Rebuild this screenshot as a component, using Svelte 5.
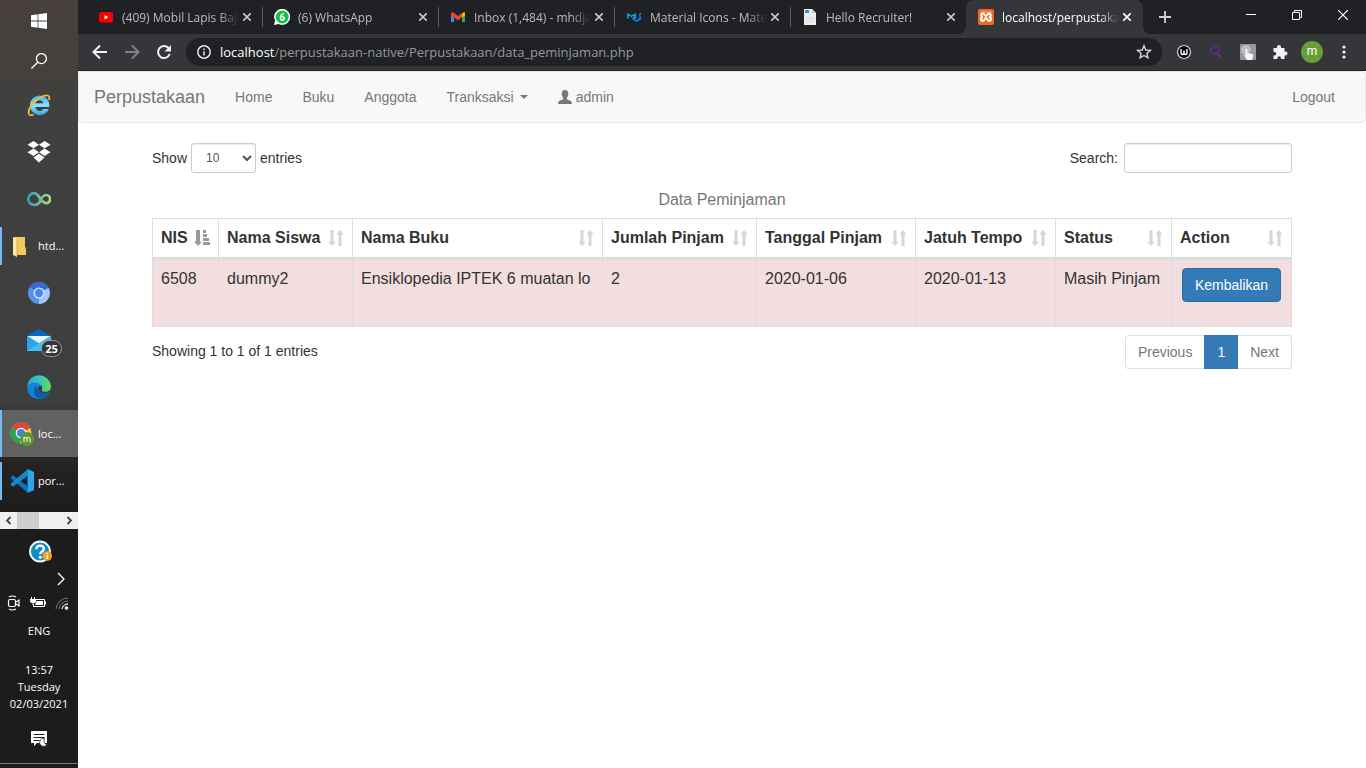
<script>
  const tabs = [
    { icon: 'youtube', title: '(409) Mobil Lapis Baja' },
    { icon: 'whatsapp', title: '(6) WhatsApp' },
    { icon: 'gmail', title: 'Inbox (1,484) - mhdja' },
    { icon: 'mui', title: 'Material Icons - Mate' },
    { icon: 'page', title: 'Hello Recruiter!' },
    { icon: 'xampp', title: 'localhost/perpustaka', active: true }
  ];

  const columns = [
    { name: 'NIS', width: 67, sorted: true },
    { name: 'Nama Siswa', width: 134 },
    { name: 'Nama Buku', width: 250 },
    { name: 'Jumlah Pinjam', width: 154 },
    { name: 'Tanggal Pinjam', width: 159 },
    { name: 'Jatuh Tempo', width: 140 },
    { name: 'Status', width: 116 },
    { name: 'Action', width: 120 }
  ];

  const rows = [
    ['6508', 'dummy2', 'Ensiklopedia IPTEK 6 muatan lo', '2', '2020-01-06', '2020-01-13', 'Masih Pinjam']
  ];

  let length = $state('10');
  let query = $state('');
</script>

<div class="screen">
  <aside class="taskbar">
    <div class="apps">
      <button class="slot short" aria-label="Start">
        <svg width="16" height="16" viewBox="0 0 16 16" fill="#fff"><path d="M0 2.2 6.6 1.3V7.6H0zM7.4 1.2 16 0V7.6H7.4zM0 8.4H6.6V14.7L0 13.8zM7.4 8.4H16V16L7.4 14.8z" /></svg>
      </button>
      <button class="slot short" aria-label="Cari">
        <svg width="16" height="16" viewBox="0 0 16 16" fill="none" stroke="#fff" stroke-width="1.3"><circle cx="10.4" cy="5.6" r="5" /><path d="M6.8 9.2.4 15.6" /></svg>
      </button>
      <button class="slot" aria-label="Internet Explorer">
        <svg width="24" height="24" viewBox="0 0 24 24">
          <defs><linearGradient id="ie" x1="0" y1="0" x2="0" y2="1"><stop offset="0" stop-color="#3db4ee" /><stop offset=".5" stop-color="#8be0ff" /><stop offset="1" stop-color="#35a6e6" /></linearGradient></defs>
          <path d="M12.500 2.500A9.800 9.800 0 1 0 21.800 16H16.200A4.200 4.200 0 0 1 8.500 14H22.300C23 7.500 18.500 2.500 12.500 2.500zM8.500 10.200A4.200 4.200 0 0 1 16.500 10.200z" fill="url(#ie)" />
          <path d="M22 7C23.500 2 20 .900 13.500 4.200C6 8 .500 16.500 1.800 20.800C2.300 22.300 4.200 22.600 6.600 21.500" fill="none" stroke="#f3bd2b" stroke-width="1.800" />
        </svg>
      </button>
      <button class="slot" aria-label="Dropbox">
        <svg width="24" height="24" viewBox="0 0 24 24" fill="#fff"><path d="M6.5 1 12 4.7 6.5 8.3.5 4.7zM17.5 1 23.5 4.7 17.5 8.3 12 4.7zM.5 12.2 6.5 8.5 12 12.2 6.5 16zM17.5 8.5 23.5 12.2 17.5 16 12 12.2zM6.5 17.5 12 13.8 17.5 17.5 12 22.5z" /></svg>
      </button>
      <button class="slot" aria-label="Infinity">
        <svg width="24" height="16" viewBox="0 0 24 16" fill="none" stroke-width="2.7">
          <defs><linearGradient id="inf"><stop offset="0" stop-color="#3a9bb5" /><stop offset="1" stop-color="#a9dc83" /></linearGradient></defs>
          <path d="M14 9.7C11.5 13 9.8 14 7.2 14A5.8 5.8 0 0 1 7.2 2.2C12 2.2 14 12.2 19 12.2A4.1 4.1 0 0 0 19 4C16.8 4 15 6 12.5 10" stroke="url(#inf)" />
        </svg>
      </button>
      <button class="slot labelled running">
        <svg width="24" height="24" viewBox="0 0 24 24"><path d="M4 3h11v10l1 1v7H5z" fill="#f4c95c" /><path d="M3 3l4 2v18l-4-2z" fill="#ffe9a2" /><path d="M7 6v15" stroke="#dcae43" /></svg>
        <span>htd...</span>
      </button>
      <button class="slot" aria-label="Chromium">
        <svg width="24" height="24" viewBox="0 0 24 24"><circle cx="12" cy="12" r="11" fill="#5b91ee" /><path d="M12 12 2.7 6A11 11 0 0 1 21.5 6.5z" fill="#376bcb" /><path d="M12 12 21.6 7A11 11 0 0 1 12 23z" fill="#a5c4fb" /><circle cx="12" cy="12" r="5.5" fill="#dce9ff" /><circle cx="12" cy="12" r="4.2" fill="#4b87ed" /></svg>
      </button>
      <button class="slot mail" aria-label="Mail, 25 baru">
        <svg width="24" height="24" viewBox="0 0 24 24"><path d="M0 8 12 .8 24 8v5H0z" fill="#0868bd" /><path d="M0 8h24L12 15.500z" fill="#f2f3f5" /><path d="M0 8 12 15.500 24 8V23H0z" fill="#27a5ed" /><path d="M24 8V23H0z" fill="#42bef5" /><path d="M2 8h20L12 15z" fill="#f2f3f5" /></svg>
        <span class="count">25</span>
      </button>
      <button class="slot" aria-label="Microsoft Edge">
        <svg width="24" height="24" viewBox="0 0 24 24">
          <defs>
            <linearGradient id="edge"><stop offset="0" stop-color="#25a9e0" /><stop offset=".5" stop-color="#2fc6c4" /><stop offset="1" stop-color="#66db52" /></linearGradient>
          </defs>
          <path d="M.300 10C-1 18 4.500 24 12 24C17 24 21 21.500 23 17.500C20 19 16 19 14 16.500V8L6 5z" fill="#1583d8" />
          <path d="M8.500 11C4.500 18 9 24 14.500 23.700A12 12 0 0 0 22.800 17.800C18.500 20.500 12.500 19 11 14z" fill="#0d5ca9" />
          <path d="M.200 10.500A12 12 0 0 1 24 11C24.200 15.500 20.500 17.300 16.500 16.700C14.300 16.200 14.200 15.200 15 13.800C16.500 8 6 4.500 .200 10.500z" fill="url(#edge)" />
          <path d="M11 13C11 11 13.500 10 15.200 12.200C15.200 13.500 14.200 14 14.300 15.200C14.800 17.300 19 17.700 22.500 17.300C18.500 19.800 11.500 18.500 11 13z" fill="#3a3d3f" />
        </svg>
      </button>
      <button class="slot labelled running current">
        <svg width="24" height="24" viewBox="0 0 24 24"><circle cx="11" cy="11" r="10.5" fill="#f9cb37" /><path d="M11 11 2 5.5A10.5 10.5 0 0 1 20.3 6z" fill="#df4535" /><path d="M11 11 2 5.4A10.5 10.5 0 0 0 10 21.5z" fill="#2da252" /><circle cx="11" cy="11" r="5.3" fill="#fff" /><circle cx="11" cy="11" r="4.1" fill="#4482ed" /><circle cx="17" cy="17" r="7" fill="#5b9832" /><path d="M14 20v-5M14 16.8q0-1.5 1.5-1.5T17 16.8V20M17 16.8q0-1.5 1.5-1.5T20 16.8V20" fill="none" stroke="#fff" /></svg>
        <span>loc...</span>
      </button>
      <button class="slot labelled running">
        <svg width="24" height="24" viewBox="0 0 24 24"><path d="M17.5 0 24 3v18l-6.500 3z" fill="#29a6f2" /><path d="M.8 8 3 6.300 18 17.500V24L.8 9.500z" fill="#0f73bb" /><path d="M.8 16 3 17.700 18 6.500V0L.8 14.500z" fill="#1688d3" /></svg>
        <span>por...</span>
      </button>
    </div>
    <div class="hscroll">
      <svg width="17" height="17" viewBox="0 0 17 17" fill="none" stroke="#444" stroke-width="1.8"><path d="M10.500 5 7 8.500 10.500 12" /></svg>
      <span class="thumb"></span>
      <svg width="17" height="17" viewBox="0 0 17 17" fill="none" stroke="#444" stroke-width="1.8"><path d="M6.500 5 10 8.500 6.500 12" /></svg>
    </div>
    <div class="tray">
      <div class="help">
        <svg width="24" height="24" viewBox="0 0 24 24"><circle cx="12" cy="11.500" r="10" fill="#118cc9" stroke="#fff" stroke-width="1.800" /><path d="M8.300 9.200Q8.500 5.600 12.200 5.600 15.800 5.700 15.800 8.700 15.800 10.500 13.800 11.700 12.200 12.600 12.200 14.200" fill="none" stroke="#fff" stroke-width="2.400" /><circle cx="12.200" cy="17.200" r="1.500" fill="#fff" /><circle cx="19.200" cy="16" r="4.800" fill="#eda41f" /><path d="M19.200 15v4M19.200 12.700v1.300" stroke="#fff" stroke-width="1.500" /></svg>
      </div>
      <div class="expand">
        <svg width="10" height="14" viewBox="0 0 10 14" fill="none" stroke="#fff" stroke-width="1.300"><path d="M2 1 8 7 2 13" /></svg>
      </div>
      <div class="status">
        <svg width="14" height="16" viewBox="0 0 14 16" fill="none" stroke="#fff" stroke-width="1.200"><rect x="1.500" y="4.500" width="7" height="7" rx="1.500" /><path d="M9 7 12 5v6L9 9M2 2Q5 0 9 2M2 14Q5 16 9 14" /></svg>
        <svg width="16" height="16" viewBox="0 0 16 16"><path d="M5.500 4.500H14.500V11.500H3.500V9.500" fill="none" stroke="#fff" /><path d="M6.500 6H13v4H5zM15 6.500h1v3h-1z" fill="#fff" /><path d="M1.500 2v3M4.500 2v3M0 4.500H6L5 7.500H1zM3 7v3" stroke="#fff" fill="#fff" /></svg>
        <svg width="14" height="16" viewBox="0 0 14 16" fill="none"><path d="M1 14A12 12 0 0 1 13 3M4 14A9 9 0 0 1 13 6" stroke="#777" /><path d="M7 14A6 6 0 0 1 13 9" stroke="#ddd" stroke-width="1.300" /><circle cx="11.500" cy="13" r="1.800" fill="#fff" /></svg>
      </div>
      <div class="lang">ENG</div>
      <div class="clock"><span>13:57</span><span>Tuesday</span><span>02/03/2021</span></div>
      <div class="notes">
        <svg width="18" height="18" viewBox="0 0 18 18"><path d="M1 1H17V13H7L4 16V13H1z" fill="#fff" /><path d="M3.500 4.500h11M3.500 7.500h11M3.500 10.500h6" stroke="#222" /><path d="M14.500 8.500A4 4 0 1 0 17 14.500A4 4 0 0 1 14.500 8.500z" fill="#fff" stroke="#222" stroke-width=".8" /></svg>
      </div>
    </div>
  </aside>

  <div class="window">
    <div class="tabstrip">
      {#each tabs as tab}
        <div class="tab" class:active={tab.active}>
          <svg class="favicon" width="16" height="16" viewBox="0 0 16 16">
            {#if tab.icon === 'youtube'}
              <rect x="1" y="3" width="14" height="10.500" rx="2.500" fill="#f00" /><path d="M6.500 6 10.300 8.200 6.500 10.500z" fill="#fff" />
            {:else if tab.icon === 'whatsapp'}
              <path d="M0 16 1 11.500A8 8 0 1 1 4.500 15z" fill="#fff" /><circle cx="8.200" cy="8" r="6.500" fill="#10c143" /><path d="M10 5.300Q7 4.300 6.400 8.300" fill="none" stroke="#fff" stroke-width="1.600" /><circle cx="8.300" cy="9.300" r="1.800" fill="none" stroke="#fff" stroke-width="1.500" />
            {:else if tab.icon === 'gmail'}
              <path d="M1 4.500V13H4V6.500z" fill="#4285f4" /><path d="M15 4.500V13H12V6.500z" fill="#34a853" /><path d="M12 4.500 14 3Q15 3 15 4.500V6.500L12 8.500z" fill="#fbbc04" /><path d="M1 4.500Q1.500 2.500 3.500 3.500L8 7 12 4V8L8 11.500 4 8.500 1 6.500z" fill="#ea4335" />
            {:else if tab.icon === 'mui'}
              <path d="M1 10V4L5.500 6.500 10 4V9L7 10.700 5.500 9.700 8 8.200V6.700L5.500 8.200 2.500 6.500V9z" fill="#0aa4ee" /><path d="M7 11 10.500 13 15 10.500V7L13 8V9.500L10.500 11 8.500 10zM13 5 15 3.800V6L13 7z" fill="#007fff" />
            {:else if tab.icon === 'page'}
              <path d="M2 0H10L14 4V16H2z" fill="#eee" /><path d="M10 0V4H14z" fill="#c8c8c8" /><rect x="3" y="1" width="4" height="3" fill="#219bd3" /><path d="M4 8.500h8M4 10.500h8M4 12.500h8" stroke="#ddd" />
            {:else}
              <rect width="16" height="16" rx="2" fill="#ec6b1c" /><path d="M2 3H14" stroke="#f6b48b" /><path d="M5 4.500A1.700 1.700 0 0 0 5 8 1.700 1.700 0 0 0 5 11.800C7 11.800 6.500 9 8 9S9 11.800 11 11.800A1.700 1.700 0 0 0 11 8 1.700 1.700 0 0 0 11 4.500C9 4.500 9.500 7 8 7S7 4.500 5 4.500z" fill="none" stroke="#fff" stroke-width="1.900" />
            {/if}
          </svg>
          <span class="title">{tab.title}</span>
          <button class="close" aria-label="Tutup tab">
            <svg width="8" height="8" viewBox="0 0 8 8" stroke="currentColor" stroke-width="1.600"><path d="M0 0 8 8M8 0 0 8" /></svg>
          </button>
        </div>
      {/each}
      <button class="plus" aria-label="Tab baru">
        <svg width="12" height="12" viewBox="0 0 12 12" stroke="#d0d1d3" stroke-width="1.800"><path d="M6 0V12M0 6H12" /></svg>
      </button>
      <div class="controls">
        <button aria-label="Minimalkan"><svg width="10" height="10" viewBox="0 0 10 10" stroke="#fff"><path d="M0 4.500H10" /></svg></button>
        <button aria-label="Pulihkan"><svg width="10" height="10" viewBox="0 0 10 10" stroke="#fff" fill="none"><path d="M.500 2.500H7.500V9.500H.500zM2.500 2.500V.500H9.500V7.500H7.500" /></svg></button>
        <button aria-label="Tutup"><svg width="10" height="10" viewBox="0 0 10 10" stroke="#fff" stroke-width="1.200"><path d="M0 0 10 10M10 0 0 10" /></svg></button>
      </div>
    </div>

    <div class="toolbar">
      <button class="tool" aria-label="Kembali"><svg width="16" height="16" viewBox="0 0 16 16" fill="none" stroke="#f1f3f4" stroke-width="2"><path d="M15 8H2M8 1.500 1.500 8 8 14.500" /></svg></button>
      <button class="tool" aria-label="Maju"><svg width="16" height="16" viewBox="0 0 16 16" fill="none" stroke="#818285" stroke-width="2"><path d="M1 8H14M8 1.500 14.500 8 8 14.500" /></svg></button>
      <button class="tool" aria-label="Muat ulang"><svg width="16" height="16" viewBox="0 0 16 16"><path d="M13.700 10A6 6 0 1 1 12.500 4" fill="none" stroke="#f1f3f4" stroke-width="2" /><path d="M15 1V7.500H8.500z" fill="#f1f3f4" /></svg></button>
      <div class="omnibox">
        <svg width="16" height="16" viewBox="0 0 16 16" fill="none" stroke="#e4e6e8" stroke-width="1.500"><circle cx="8" cy="8" r="6.200" /><path d="M8 7.200V11.500M8 4.500V6" /></svg>
        <span class="url"><b>localhost</b>/perpustakaan-native/Perpustakaan/data_peminjaman.php</span>
        <svg width="16" height="16" viewBox="0 0 16 16" fill="none" stroke="#d3d5d7" stroke-width="1.400"><path d="M8 1.800 9.800 6 14.300 6.400 10.900 9.400 11.900 13.800 8 11.500 4.100 13.800 5.100 9.400 1.700 6.400 6.200 6z" /></svg>
      </div>
      <button class="tool" aria-label="Ekstensi W"><svg width="16" height="16" viewBox="0 0 16 16" fill="none"><circle cx="8" cy="8" r="6.500" fill="#000" stroke="#ddd" stroke-width="1.200" /><path d="M5 5V8.500Q5 10.500 6.500 10.500T8 8.500V6.500M8 8.500Q8 10.500 9.500 10.500T11 8.500V5" stroke="#fff" stroke-width="1.400" /></svg></button>
      <button class="tool" aria-label="Ekstensi pencarian"><svg width="16" height="16" viewBox="0 0 16 16" fill="none" stroke="#71269c" stroke-width="1.500"><circle cx="7" cy="6" r="3.900" /><path d="M9.500 9 12.500 13.500" stroke-width="2" /></svg></button>
      <button class="tool" aria-label="Ekstensi sentuh"><svg width="16" height="16" viewBox="0 0 16 16"><rect width="16" height="16" rx="1" fill="#999" /><circle cx="6" cy="6" r="4.200" fill="#bbb" stroke="#ccc" /><path d="M5.500 5H7.500V9L12.500 10Q13.500 10.500 13 12L12 16H7L4 11.500 5.500 11z" fill="#f3f6fc" /></svg></button>
      <button class="tool" aria-label="Ekstensi"><svg width="16" height="16" viewBox="0 0 16 16" fill="#f1f3f4"><path d="M1.500 4H5V3A2 2 0 0 1 9 3V4H12.500V7.500H13.500A2 2 0 0 1 13.500 11.500H12.500V15H9V14A1.800 1.800 0 0 0 5.400 14V15H1.500V11.500H2.500A1.800 1.800 0 0 0 2.500 7.900H1.500z" /></svg></button>
      <button class="tool" aria-label="Profil"><span class="avatar">m</span></button>
      <button class="tool" aria-label="Menu"><svg width="4" height="14" viewBox="0 0 4 14" fill="#f1f3f4"><circle cx="2" cy="2" r="1.600" /><circle cx="2" cy="7" r="1.600" /><circle cx="2" cy="12" r="1.600" /></svg></button>
    </div>

    <div class="page">
      <nav class="navbar">
        <a class="brand" href="#home">Perpustakaan</a>
        <a href="#home">Home</a>
        <a href="#buku">Buku</a>
        <a href="#anggota">Anggota</a>
        <a href="#transaksi">Tranksaksi <span class="caret"></span></a>
        <a href="#admin"><svg width="14" height="14" viewBox="0 0 14 14" fill="#777"><path d="M7 0C9.500 0 10.500 1.700 10.300 4 10.200 6 9.500 7 8.800 7.800V9.200L12.500 10.800Q14 11.500 14 14H0Q0 11.500 1.500 10.800L5.200 9.200V7.800C4.500 7 3.800 6 3.700 4 3.500 1.700 4.500 0 7 0z" /></svg> admin</a>
        <a class="logout" href="#logout">Logout</a>
      </nav>

      <main class="container">
        <div class="filters">
          <label>Show
            <select bind:value={length}><option>10</option><option>25</option><option>50</option><option>100</option></select>
            entries</label>
          <label class="search">Search: <input type="search" bind:value={query} /></label>
        </div>

        <table>
          <caption>Data Peminjaman</caption>
          <colgroup>
            {#each columns as col}<col style="width: {col.width}px" />{/each}
          </colgroup>
          <thead>
            <tr>
              {#each columns as col}
                <th scope="col">
                  <button class="sort" class:sorted={col.sorted}>
                    <span>{col.name}</span>
                    <svg width="16" height="16" viewBox="0 0 16 16" fill="currentColor">
                      {#if col.sorted}
                        <path d="M2 0H6V11.500H8L4 16 0 11.500H2zM9 0H12V3H9zM9 4H13V7H9zM9 8H15V11H9zM9 12H16V15H9z" />
                      {:else}
                        <path d="M2.500 0H5.500V11.500H7.800L4 16 .200 11.500H2.500zM10.500 16H13.500V4.500H15.800L12 0 8.200 4.500H10.500z" />
                      {/if}
                    </svg>
                  </button>
                </th>
              {/each}
            </tr>
          </thead>
          <tbody>
            {#each rows as row}
              <tr>
                {#each row as cell}<td>{cell}</td>{/each}
                <td class="action"><button class="btn">Kembalikan</button></td>
              </tr>
            {/each}
          </tbody>
        </table>

        <div class="footer">
          <span>Showing 1 to 1 of 1 entries</span>
          <div class="pagination">
            <button>Previous</button><button class="on">1</button><button>Next</button>
          </div>
        </div>
      </main>
    </div>
  </div>
</div>

<style>
  :global(body) { margin: 0; background: #fff; }
  * { box-sizing: border-box; }
  button { font: inherit; color: inherit; border: 0; background: none; padding: 0; margin: 0; }
  svg { display: block; flex: none; }
  a { color: inherit; text-decoration: none; }

  .screen { display: flex; min-height: 100vh; }

  .taskbar { width: 78px; flex: none; background: #1c1c1c; color: #fff; font: 12px/17px "Open Sans", "Noto Sans", sans-serif; }
  .apps { display: flex; flex-direction: column; padding: 1px 0 7px; background: linear-gradient(#48403b, #3f4040 25%, #3e3e3e 78%, #242221 92%, #1f1d1c); }
  .slot { position: relative; display: flex; align-items: center; justify-content: center; height: 47px; }
  .slot.short { height: 40px; }
  .slot.labelled { justify-content: flex-start; padding-left: 10px; gap: 4px; font-size: 11px; }
  .running::before { content: ""; position: absolute; left: 0; top: 5px; bottom: 4px; width: 2px; background: #76b9ed; }
  .slot.current { background: #616161; }
  .current::before { top: 0; bottom: 0; }
  .count { position: absolute; left: 41px; top: 24px; width: 21px; height: 17px; border: 1px solid #999; border-radius: 9px; background: #353535; font: bold 11px/15px "Open Sans", sans-serif; text-align: center; }
  .hscroll { display: flex; height: 17px; margin-top: 1px; background: #f0f0f0; }
  .thumb { width: 22px; margin-right: auto; background: #cdcdcd; }
  .tray { display: flex; flex-direction: column; align-items: center; border-bottom: 1px solid #777; padding-bottom: 5px; }
  .help { height: 38px; padding: 11px 0 0 1px; }
  .expand { display: flex; align-items: center; align-self: flex-end; height: 24px; padding-right: 12px; }
  .status { display: flex; justify-content: space-between; align-items: center; align-self: stretch; height: 24px; padding: 0 9px 0 7px; }
  .lang { margin-top: 4px; font-size: 11px; line-height: 24px; }
  .clock { display: flex; flex-direction: column; align-items: center; margin-top: 18px; font-size: 11px; }
  .notes { display: flex; align-items: center; height: 38px; margin-top: 8px; }

  .window { flex: 1; min-width: 0; display: flex; flex-direction: column; }
  .tabstrip { display: flex; height: 34px; padding-left: 8px; background: #202124; color: #b9bcc0; font: 12px/17px "Open Sans", "Noto Sans", sans-serif; }
  .tab { position: relative; display: flex; align-items: center; flex: 0 1 176px; min-width: 0; padding: 0 11px 0 12px; }
  .tab:not(.active):not(:nth-child(5))::after { content: ""; position: absolute; right: -1px; top: 7px; height: 20px; width: 1px; background: #55575b; }
  .title { flex: 1; min-width: 0; margin: 0 4px 0 8px; overflow: hidden; white-space: nowrap; mask-image: linear-gradient(to left, transparent, #000 20px); }
  .close { display: flex; align-items: center; justify-content: center; flex: none; width: 8px; height: 17px; color: #c6c8ca; }
  .tab.active { flex-basis: 177px; padding-right: 12px; background: #35363a; border-radius: 8px 8px 0 0; color: #fff; }
  .tab.active::before, .tab.active::after { content: ""; position: absolute; bottom: 0; width: 8px; height: 8px; }
  .tab.active::before { left: -8px; background: radial-gradient(circle at 0 0, transparent 8px, #35363a 8px); }
  .tab.active::after { right: -8px; background: radial-gradient(circle at 100% 0, transparent 8px, #35363a 8px); }
  .active .close { color: #fff; }
  .plus { width: 44px; display: flex; align-items: center; justify-content: center; }
  .controls { display: flex; margin-left: auto; height: 29px; }
  .controls button { width: 46px; display: flex; align-items: center; justify-content: center; }

  .toolbar { display: flex; align-items: center; height: 37px; padding: 0 6px; background: #35363a; border-bottom: 1px solid #262425; }
  .tool { display: flex; align-items: center; justify-content: center; flex: none; width: 32px; height: 28px; }
  .omnibox { display: flex; align-items: center; gap: 8px; flex: 1; height: 28px; margin: 0 6px 0 6px; padding: 0 10px; border-radius: 14px; background: #202124; }
  .url { flex: 1; color: #95989b; font: 13px/18px "Open Sans", "Noto Sans", sans-serif; }
  .url b { color: #fff; font-weight: normal; }
  .avatar { width: 22px; height: 22px; border-radius: 50%; background: #689f38; color: #fff; font: 12px/21px Roboto, sans-serif; text-align: center; }

  .page { flex: 1; background: #fff; color: #333; font: 14px/20px "Liberation Sans", Arial, sans-serif; }
  .navbar { display: flex; align-items: center; height: 52px; padding: 0 15px; border: 1px solid #e7e7e7; border-radius: 4px; background: #f8f8f8; color: #777; }
  .navbar a { display: flex; align-items: center; gap: 4px; padding: 15px; }
  .navbar .brand { padding-left: 0; font-size: 18px; }
  .navbar .logout { margin-left: auto; }
  .caret { margin-left: 2px; border-top: 4px solid #777; border-left: 4px solid transparent; border-right: 4px solid transparent; }

  .container { max-width: 1170px; margin: 20px auto 0; padding: 0 15px; }
  .filters { display: flex; justify-content: space-between; }
  label { display: flex; align-items: center; gap: 4px; line-height: 18px; }
  .search { gap: 6px; }
  select, input { height: 30px; border: 1px solid #ccc; border-radius: 3px; background: #fff; color: #555; font: 12px/18px "Liberation Sans", Arial, sans-serif; box-shadow: inset 0 1px 1px rgba(0, 0, 0, .075); }
  select { width: 65px; padding: 5px 2px 5px 10px; }
  input { width: 168px; padding: 5px 10px; appearance: none; }

  table { width: 100%; margin-top: 8px; table-layout: fixed; border-collapse: separate; border-spacing: 0; font-size: 16px; line-height: 22px; }
  caption { padding: 8px 0 7px; color: #777; }
  th, td { padding: 8px; border-right: 1px solid #ddd; text-align: left; vertical-align: top; white-space: nowrap; }
  th:first-child, td:first-child { border-left: 1px solid #ddd; }
  th { border-top: 1px solid #ddd; border-bottom: 3px solid #ddd; }
  td { border-bottom: 1px solid #ddd; background: #f2dede; }
  .sort { display: flex; align-items: center; justify-content: space-between; width: 100%; font-weight: bold; }
  .sort svg { color: #d6d6d6; }
  .sort.sorted svg { color: #999; }
  .action { height: 67px; padding-left: 10px; }
  .btn { display: block; height: 34px; padding: 0 12px; border: 1px solid #2e6da4; border-radius: 4px; background: #337ab7; color: #fff; font-size: 14px; }

  .footer { display: flex; justify-content: space-between; margin-top: 8px; }
  .footer > span { padding-top: 6px; }
  .pagination { display: flex; }
  .pagination button { height: 34px; padding: 0 12px; border: 1px solid #ddd; color: #777; }
  .pagination button:first-child { border-right: 0; border-radius: 4px 0 0 4px; }
  .pagination button:last-child { border-left: 0; border-radius: 0 4px 4px 0; }
  .pagination .on { border-color: #337ab7; background: #337ab7; color: #fff; }
</style>
